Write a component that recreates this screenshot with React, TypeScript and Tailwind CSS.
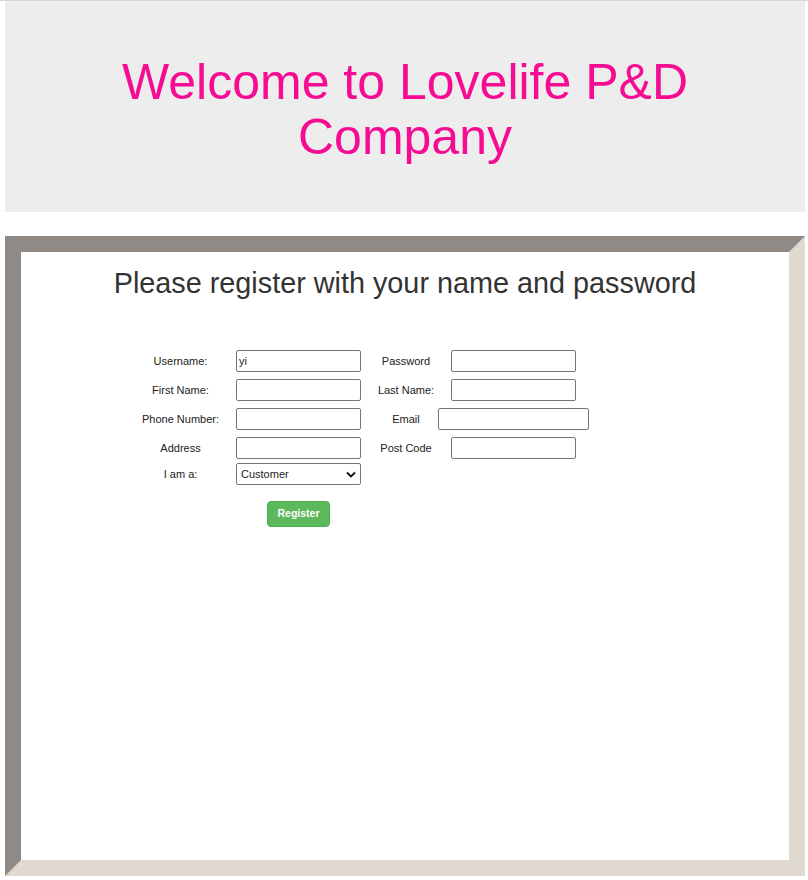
const labelCls = "text-[11px] text-[#222] text-center leading-[22px]";
const inputCls =
  "block h-[22px] border border-[#767676] rounded-[2px] bg-white px-[2px] text-[11px] text-[#222] outline-none";

function Row({
  label,
  right,
  rightLabel,
  className = "",
  children,
}: {
  label: string;
  rightLabel?: string;
  right?: React.ReactNode;
  className?: string;
  children: React.ReactNode;
}) {
  return (
    <div className={`flex items-center h-[22px] ${className}`}>
      <div className={`w-[101px] ${labelCls}`}>{label}</div>
      <div className="w-[143px] pl-[5px]">{children}</div>
      <div className={`w-[64px] ${labelCls}`}>{rightLabel}</div>
      <div className="w-[151px] flex justify-center">{right}</div>
    </div>
  );
}

export default function App() {
  return (
    <div className="min-h-[880px] bg-white font-['Liberation_Sans',Arial,sans-serif]">
      <div className="h-px bg-[#d6d6d6]" />
      <div className="pl-[5px] pr-[3px]">
        <header className="bg-[#ededed] h-[211px] pt-[54px] text-center">
          <h1 className="text-[50px] leading-[55px] text-[#f50c93] px-[100px]">
            Welcome to Lovelife P&amp;D Company
          </h1>
        </header>

        <main className="mt-[24px] h-[640px] border-[16px] border-t-[#8f8a85] border-l-[#8f8a85] border-b-[#e0d9cf] border-r-[#e0d9cf] bg-white">
          <h2 className="pt-[15px] text-center text-[28.8px] leading-[33px] text-[#333]">
            Please register with your name and password
          </h2>

          <form
            className="mt-[50px] ml-[109px] flex flex-col"
            onSubmit={(e) => e.preventDefault()}
          >
            <Row
              label="Username:"
              rightLabel="Password"
              right={<input type="password" className={`${inputCls} w-[125px]`} />}
            >
              <input className={`${inputCls} w-[125px]`} defaultValue="yi" />
            </Row>
            <Row
              className="mt-[7px]"
              label="First Name:"
              rightLabel="Last Name:"
              right={<input className={`${inputCls} w-[125px]`} />}
            >
              <input className={`${inputCls} w-[125px]`} />
            </Row>
            <Row
              className="mt-[7px]"
              label="Phone Number:"
              rightLabel="Email"
              right={<input className={`${inputCls} w-[151px]`} />}
            >
              <input className={`${inputCls} w-[125px]`} />
            </Row>
            <Row
              className="mt-[7px]"
              label="Address"
              rightLabel="Post Code"
              right={<input className={`${inputCls} w-[125px]`} />}
            >
              <input className={`${inputCls} w-[125px]`} />
            </Row>
            <Row className="mt-[4px]" label="I am a:">
              <div className="relative w-[125px]">
                <select
                  className={`${inputCls} w-[125px] appearance-none pl-[4px] pr-[18px]`}
                  defaultValue="Customer"
                >
                  <option>Customer</option>
                  <option>Staff</option>
                </select>
                <svg
                  className="absolute right-[5px] top-[8px] pointer-events-none"
                  width="10"
                  height="7"
                  viewBox="0 0 10 7"
                >
                  <path d="M1 1.5l4 4 4-4" fill="none" stroke="#111" strokeWidth="1.8" />
                </svg>
              </div>
            </Row>

            <div className="mt-[16px] ml-[106px] w-[125px] flex justify-center">
              <button
                type="submit"
                className="h-[26px] w-[63px] rounded-[4px] border border-[#4cae4c] bg-[#5cb85c] text-[10.5px] font-bold text-white"
              >
                Register
              </button>
            </div>
          </form>
        </main>
      </div>
    </div>
  );
}
